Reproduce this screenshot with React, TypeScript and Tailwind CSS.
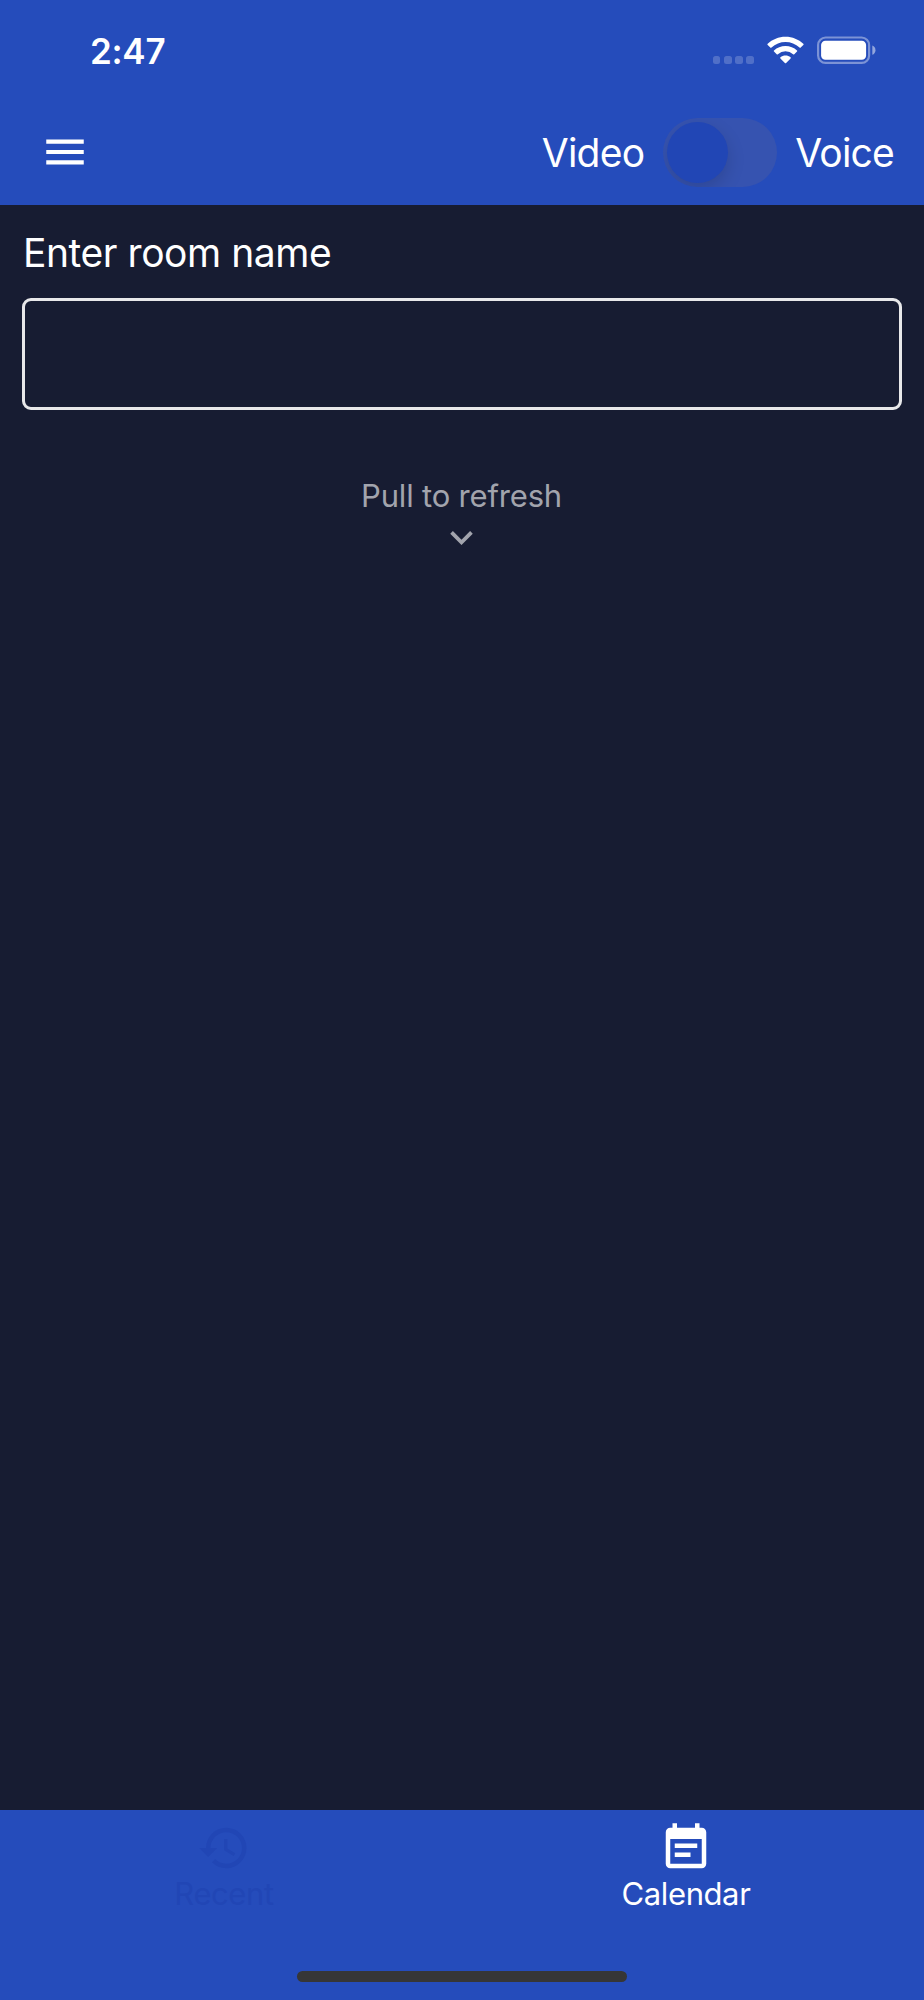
import { MdEventNote, MdHistory, MdKeyboardArrowDown, MdMenu } from "react-icons/md";

function SignalDots() {
  return (
    <div className="flex h-[27.5px] items-end gap-[3.6px]" aria-hidden>
      <span className="size-[7.6px] rounded-[2.5px] bg-white/20" />
      <span className="size-[7.6px] rounded-[2.5px] bg-white/20" />
      <span className="size-[7.6px] rounded-[2.5px] bg-white/20" />
      <span className="size-[7.6px] rounded-[2.5px] bg-white/20" />
    </div>
  );
}

function WifiIcon() {
  return (
    <svg width="37" height="28" viewBox="0 0 37 28" fill="white" aria-hidden>
      <path d="M18.5.8C25.4.8 31.7 3.5 36.3 7.8c.4.4.4.8 0 1.2l-2.6 2.6c-.4.4-.8.4-1.2 0a20.3 20.3 0 0 0-28 0c-.4.4-.8.4-1.2 0L.7 9c-.4-.4-.4-.8 0-1.2C5.3 3.5 11.6.8 18.5.8z" />
      <path d="M18.5 9.9c4.4 0 8.5 1.7 11.5 4.5.4.4.4.8 0 1.2l-2.7 2.6c-.4.4-.8.4-1.2 0a11.4 11.4 0 0 0-15.2 0c-.4.4-.8.4-1.2 0L7 15.6c-.4-.4-.4-.8 0-1.2 3-2.8 7.1-4.5 11.5-4.5z" />
      <path d="M18.5 19.6c1.9 0 3.7.6 5 1.6.5.4.5.8.1 1.2l-4.5 4.5c-.4.4-.8.4-1.2 0l-4.5-4.5c-.4-.4-.4-.8.1-1.2 1.3-1 3.1-1.6 5-1.6z" />
    </svg>
  );
}

function BatteryIcon() {
  return (
    <svg width="60" height="28" viewBox="0 0 60 28" fill="white" aria-hidden>
      <rect x="1.1" y="1.5" width="51" height="25.4" rx="7.5" fill="none" stroke="white" strokeOpacity=".4" strokeWidth="2.2" />
      <rect x="4.1" y="4.8" width="45" height="19" rx="4.3" />
      <path d="M55.3 9.6c2 .7 3.2 2.5 3.2 4.6s-1.2 3.9-3.2 4.6z" fillOpacity=".5" />
    </svg>
  );
}

function StatusBar() {
  return (
    <div className="flex h-[100px] items-start justify-between pl-[90px] pr-[47px]">
      <div className="pt-[30px] text-[35px] font-semibold leading-[42px] tracking-[-0.3px]">
        2:47
      </div>
      <div className="flex items-start pt-[36px]">
        <SignalDots />
        <div className="mx-[13px]">
          <WifiIcon />
        </div>
        <BatteryIcon />
      </div>
    </div>
  );
}

function Header() {
  return (
    <div className="flex h-[104px] items-center justify-between pl-[40px] pr-[30px]">
      <button type="button" aria-label="Menu">
        <MdMenu className="size-[50px]" />
      </button>
      <div className="flex items-center text-[39px] leading-[48px] tracking-[-0.8px]">
        <span className="pt-px">Video</span>
        <button
          type="button"
          role="switch"
          aria-checked={false}
          aria-label="Voice only"
          className="ml-[19px] mr-[18px] flex h-[69px] w-[114px] items-center overflow-hidden rounded-full bg-[#3653b0] pl-[4px]"
        >
          <span className="size-[61px] rounded-full bg-[#2146b5] shadow-[0_7px_18px_rgba(0,0,0,0.15)]" />
        </button>
        <span className="pt-px">Voice</span>
      </div>
    </div>
  );
}

function TabBar() {
  return (
    <nav className="flex h-[190px] flex-col items-center bg-[#254cbb]">
      <div className="flex w-full text-[31px] leading-[38px] tracking-[-0.4px]">
        <div className="flex w-1/2 flex-col items-center pr-[14px] pt-[11px] text-[#2146b5]">
          <MdHistory className="size-[54px]" />
          <span>Recent</span>
        </div>
        <div className="flex w-1/2 flex-col items-center pr-[14px] pt-[11px] text-white">
          <MdEventNote className="size-[54px]" />
          <span>Calendar</span>
        </div>
      </div>
      <div className="mb-[18px] mt-auto h-[11px] w-[330px] rounded-full bg-[#363636]" />
    </nav>
  );
}

export default function App() {
  return (
    <div className="flex h-[2000px] w-[924px] flex-col bg-[#171c32] font-['Inter',sans-serif] text-white">
      <header className="h-[205px] bg-[#254cbb]">
        <StatusBar />
        <Header />
      </header>

      <main className="flex flex-1 flex-col items-center px-[22px]">
        <label
          htmlFor="room"
          className="mt-[24px] w-full pl-px text-[39px] leading-[48px] tracking-[-0.45px]"
        >
          Enter room name
        </label>
        <input
          id="room"
          className="mt-[21px] h-[112px] w-full rounded-[9px] border-[3px] border-white/90 bg-transparent px-5 text-[39px] outline-none"
        />
        <div className="mt-[67px] flex flex-col items-center pr-px text-[#a2a4ad]">
          <span className="text-[31px] leading-[38px] tracking-[-0.18px]">
            Pull to refresh
          </span>
          <MdKeyboardArrowDown className="size-[45px]" />
        </div>
      </main>

      <TabBar />
    </div>
  );
}
